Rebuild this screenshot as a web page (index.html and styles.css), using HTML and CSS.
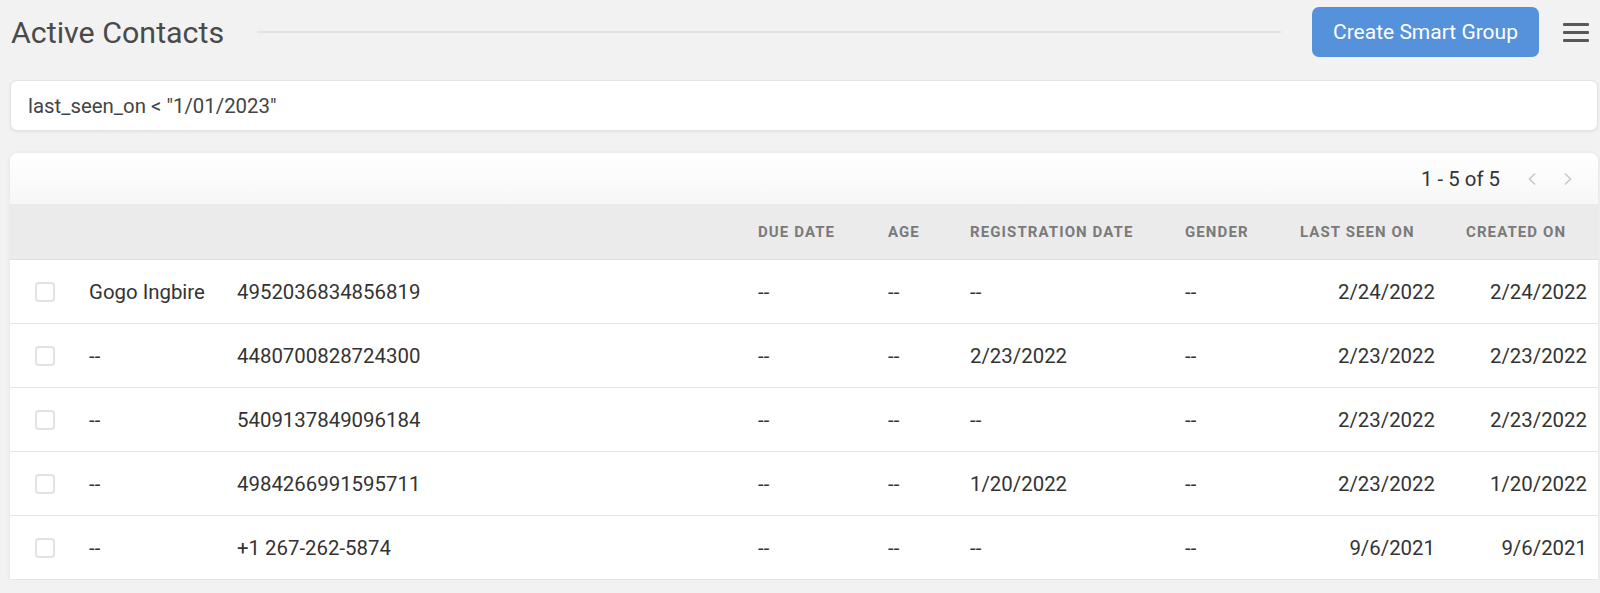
FILE: index.html
```html
<!DOCTYPE html>
<html>
<head>
<meta charset="utf-8">
<link rel="stylesheet" href="styles.css">
</head>
<body>
<div class="page">
  <header class="topbar">
    <h1 class="title">Active Contacts</h1>
    <div class="rule"></div>
    <button class="btn-primary">Create Smart Group</button>
    <button class="menu-btn" aria-label="menu">
      <span></span><span></span><span></span>
    </button>
  </header>

  <div class="search">last_seen_on &lt; "1/01/2023"</div>

  <section class="card">
    <div class="toolbar">
      <span class="range">1 - 5 of 5</span>
      <span class="chev">
        <svg width="12" height="14" viewBox="0 0 12 14"><path d="M9 1.5 L3.5 7 L9 12.5" fill="none" stroke="#c9c9c9" stroke-width="1.6"/></svg>
      </span>
      <span class="chev">
        <svg width="12" height="14" viewBox="0 0 12 14"><path d="M3 1.5 L8.5 7 L3 12.5" fill="none" stroke="#c9c9c9" stroke-width="1.6"/></svg>
      </span>
    </div>

    <div class="row head">
      <div></div><div></div><div></div>
      <div>DUE DATE</div>
      <div>AGE</div>
      <div>REGISTRATION DATE</div>
      <div>GENDER</div>
      <div>LAST SEEN ON</div>
      <div class="c9">CREATED ON</div>
    </div>

    <div class="row">
      <div class="cb-cell"><span class="cb"></span></div>
      <div>Gogo Ingbire</div>
      <div>4952036834856819</div>
      <div>--</div><div>--</div><div>--</div><div>--</div>
      <div class="num c8">2/24/2022</div>
      <div class="num c9">2/24/2022</div>
    </div>
    <div class="row">
      <div class="cb-cell"><span class="cb"></span></div>
      <div>--</div>
      <div>4480700828724300</div>
      <div>--</div><div>--</div><div>2/23/2022</div><div>--</div>
      <div class="num c8">2/23/2022</div>
      <div class="num c9">2/23/2022</div>
    </div>
    <div class="row">
      <div class="cb-cell"><span class="cb"></span></div>
      <div>--</div>
      <div>5409137849096184</div>
      <div>--</div><div>--</div><div>--</div><div>--</div>
      <div class="num c8">2/23/2022</div>
      <div class="num c9">2/23/2022</div>
    </div>
    <div class="row">
      <div class="cb-cell"><span class="cb"></span></div>
      <div>--</div>
      <div>4984266991595711</div>
      <div>--</div><div>--</div><div>1/20/2022</div><div>--</div>
      <div class="num c8">2/23/2022</div>
      <div class="num c9">1/20/2022</div>
    </div>
    <div class="row">
      <div class="cb-cell"><span class="cb"></span></div>
      <div>--</div>
      <div>+1 267-262-5874</div>
      <div>--</div><div>--</div><div>--</div><div>--</div>
      <div class="num c8">9/6/2021</div>
      <div class="num c9">9/6/2021</div>
    </div>
  </section>
</div>
</body>
</html>
```

FILE: styles.css
```css
* { box-sizing: border-box; }
html, body {
  margin: 0;
  padding: 0;
  background: #f2f2f2;
  font-family: Roboto, "Liberation Sans", sans-serif;
  color: #333;
  overflow: hidden;
}
.page {
  padding: 0 2px 0 10px;
}
.topbar {
  display: flex;
  align-items: center;
  height: 64px;
  margin-right: 9px;
}
.title {
  margin: 0 0 0 1px;
  font-size: 30.4px;
  font-weight: 400;
  color: #4a4a4a;
  white-space: nowrap;
}
.rule {
  flex: 1;
  height: 2px;
  background: #e3e3e3;
  margin: 0 31px 0 33px;
}
.btn-primary {
  width: 227px;
  height: 50px;
  border: none;
  border-radius: 7px;
  background: #5592db;
  color: #fff;
  font-family: Roboto, "Liberation Sans", sans-serif;
  font-size: 21px;
  padding: 0;
}
.menu-btn {
  display: flex;
  flex-direction: column;
  justify-content: space-between;
  width: 26px;
  height: 19px;
  margin-left: 24px;
  padding: 0;
  border: none;
  background: none;
}
.menu-btn span {
  display: block;
  height: 3px;
  border-radius: 1px;
  background: #585858;
}
.search {
  margin-top: 16px;
  height: 51px;
  background: #fff;
  border: 1px solid #e4e4e4;
  border-radius: 7px;
  box-shadow: 0 1px 3px rgba(0,0,0,0.08);
  padding: 0 17px;
  display: flex;
  align-items: center;
  font-size: 20.4px;
  color: #444;
}
.card {
  margin-top: 22px;
  background: #fff;
  border-radius: 8px 8px 0 0;
  box-shadow: 0 0 4px rgba(0,0,0,0.07);
  overflow: hidden;
}
.toolbar {
  height: 51px;
  display: flex;
  align-items: center;
  justify-content: flex-end;
  padding-right: 24px;
  background: linear-gradient(#ffffff, #f7f7f7);
}
.range {
  font-size: 20.4px;
  color: #333;
  margin-right: 2px;
}
.chev {
  display: flex;
  align-items: center;
  width: 12px;
  height: 14px;
  margin-left: 24px;
}
.row {
  display: grid;
  grid-template-columns: 79px 148px 521px 130px 82px 215px 115px 150px 148px;
  align-items: center;
  height: 64px;
  border-bottom: 1px solid #e6e6e6;
  font-size: 20.4px;
  color: #333;
  white-space: nowrap;
}
.row.head {
  height: 56px;
  background: #ebebeb;
  border-bottom: 1px solid #e0e0e0;
  font-size: 15px;
  font-weight: 700;
  letter-spacing: 1.1px;
  color: #7a7a7a;
}
.head .c9 { padding-left: 16px; }
.cb-cell { padding-left: 25px; display: flex; align-items: center; }
.cb {
  display: block;
  width: 20px;
  height: 20px;
  border: 2px solid #e2e2e2;
  border-radius: 4px;
  background: #fff;
}
.num { text-align: right; }
.c8 { padding-right: 15px; }
.c9 { padding-right: 11px; }
```
